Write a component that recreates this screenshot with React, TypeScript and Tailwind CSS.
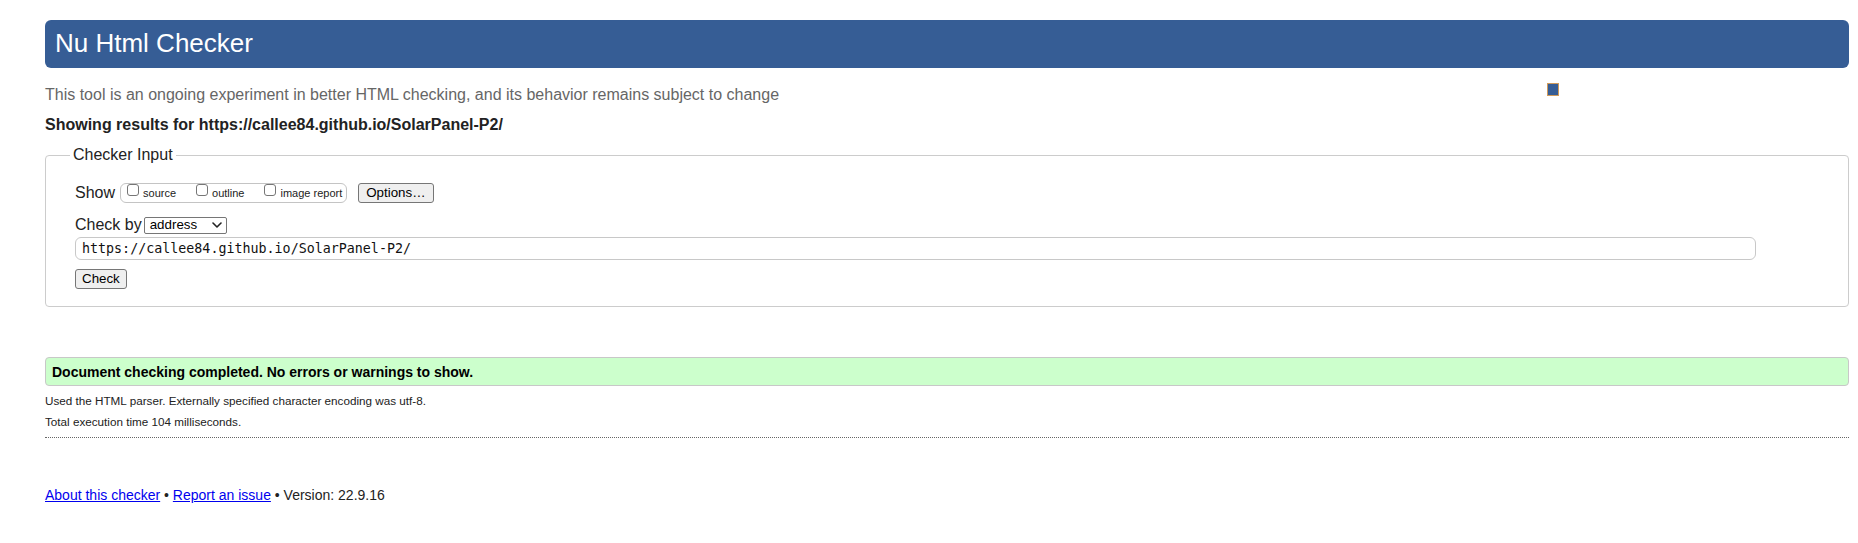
export default function App() {
  return (
    <div className="min-h-[543px] bg-white pl-[45px] pr-[9px] pt-[20px] font-[family-name:Liberation_Sans,Arial,sans-serif] text-[#222]">
      <div className="flex h-[48px] items-center rounded-[6px] bg-[#365d95] pb-[2px] pl-[10px] text-[26px] leading-none text-white">
        Nu Html Checker
      </div>

      <div className="mt-[17px] flex items-start">
        <p className="text-[16px] leading-[20px] text-[#666]">
          This tool is an ongoing experiment in better HTML checking, and its behavior remains subject to change
        </p>
        <span className="ml-auto mr-[290px] mt-[-2px] h-[13px] w-[12px] border border-[#cf9a5b] bg-[#365d95]" />
      </div>

      <p className="mt-[10px] text-[16px] font-bold leading-[20px] text-[#222]">
        Showing results for https://callee84.github.io/SolarPanel-P2/
      </p>

      <fieldset className="mt-[11px] rounded-[4px] border border-[#cccccc] pb-[17px] pl-[24px] pr-[24px] pt-[19px]">
        <legend className="px-[3px] text-[16px] leading-[18px] text-[#222]">Checker Input</legend>
        <div className="pl-[5px]">
          <div className="flex items-start">
            <span className="text-[16px] leading-[20px]">Show</span>
            <div className="ml-[5px] flex h-[20px] gap-[20px] rounded-[6px] border border-[#c4c4c4] pl-[6px] pr-[4px]">
              {["source", "outline", "image report"].map((l) => (
                <label key={l} className="flex items-start gap-[4px]">
                  <span className="h-[12px] w-[12px] rounded-[3px] border border-[#767676] bg-white" />
                  <span className="mt-[2.5px] text-[11px] leading-[13px] text-[#222]">{l}</span>
                </label>
              ))}
            </div>
            <button className="ml-[11px] h-[20px] rounded-[3px] border border-[#767676] bg-[#efefef] px-[7px] text-[13.33px] leading-none text-black">
              Options…
            </button>
          </div>

          <div className="mt-[12px] flex h-[20px] items-center">
            <span className="text-[16px] leading-[20px]">Check by</span>
            <div className="ml-[2px] flex h-[17px] w-[83px] items-center justify-between rounded-[2px] border border-[#767676] bg-white pl-[5px] pr-[4px] text-[13.33px] leading-none text-black">
              <span>address</span>
              <svg width="10" height="6" viewBox="0 0 10 6" fill="none">
                <path d="M1 1 L5 5 L9 1" stroke="#222" strokeWidth="1.6" strokeLinecap="round" strokeLinejoin="round" />
              </svg>
            </div>
          </div>

          <input
            readOnly
            defaultValue="https://callee84.github.io/SolarPanel-P2/"
            className="mt-[2px] block h-[23px] w-[1681px] rounded-[6px] border border-[#c8c8c8] bg-white pl-[6px] font-[family-name:DejaVu_Sans_Mono,monospace] text-[13.33px] text-[#111] outline-none"
          />

          <button className="mt-[9px] block h-[20px] rounded-[3px] border border-[#767676] bg-[#efefef] px-[6px] text-[13.33px] leading-none text-black">
            Check
          </button>
        </div>
      </fieldset>

      <div className="mt-[50px] flex h-[29px] items-center rounded-[4px] border border-[#c8c8c8] bg-[#ccffcc] pl-[6px] text-[14px] font-bold leading-[16px] text-black">
        Document checking completed. No errors or warnings to show.
      </div>

      <p className="mt-[8px] text-[11.7px] leading-[14px] text-[#222]">
        Used the HTML parser. Externally specified character encoding was utf-8.
      </p>
      <p className="mt-[7px] text-[11.7px] leading-[14px] text-[#222]">Total execution time 104 milliseconds.</p>

      <div className="mt-[8px] border-t border-dotted border-[#666]" />

      <p className="mt-[49px] text-[14px] leading-[16px] text-[#222]">
        <a href="#" className="text-[#0000ee] underline">About this checker</a>
        {" • "}
        <a href="#" className="text-[#0000ee] underline">Report an issue</a>
        {" • Version: 22.9.16"}
      </p>
    </div>
  );
}
